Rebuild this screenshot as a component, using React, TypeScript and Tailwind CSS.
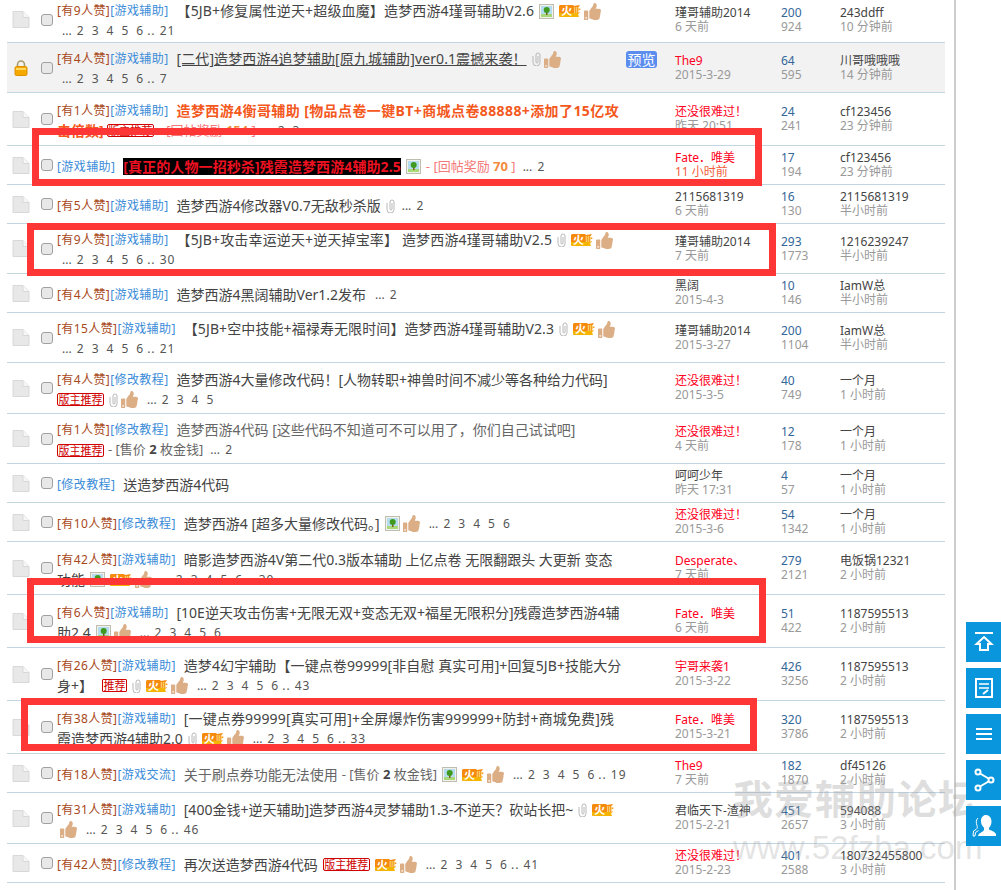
import React from "react";
import { FaThumbsUp } from "react-icons/fa";

const Like = ({ n }: { n: number }) => <span className="text-[#a8481a]">[有{n}人赞]</span>;
const Cat = ({ c }: { c: string }) => <span className="text-[#3a8bd8]">[{c}]</span>;
const Tag = ({ n, c }: { n?: number; c: string }) => (
  <span className="text-xs tracking-[0.4px] mr-2 shrink-0">
    {n ? <Like n={n} /> : null}
    <Cat c={c} />
  </span>
);

const Thumb = () => (
  <span className="inline-flex ml-[3px] mr-[2px] text-[#dcae86] shrink-0">
    <FaThumbsUp size={17} />
  </span>
);

const Img = () => (
  <svg width="15" height="15" viewBox="0 0 15 15" className="inline-block ml-[5px] shrink-0">
    <rect x="0.5" y="0.5" width="14" height="14" fill="#f2f2ea" stroke="#bdbdb0" />
    <rect x="2" y="2" width="11" height="8" fill="#b4dcef" />
    <rect x="2" y="10" width="11" height="3" fill="#a8d878" />
    <rect x="7" y="7" width="1.5" height="4" fill="#7a5a20" />
    <circle cx="7.7" cy="6" r="3" fill="#3f9a1e" />
  </svg>
);

const Clip = () => (
  <svg width="9" height="14" viewBox="0 0 9 14" className="inline-block ml-[5px] shrink-0" fill="none" stroke="#b8b8b8" strokeWidth="1">
    <path d="M1 4v6.5a3.500 3.500 0 0 0 7 0V3a2 2 0 0 0-4 0v7a1 1 0 0 0 2 0V4" />
  </svg>
);

const Fire = () => (
  <span className="relative inline-block w-[22px] h-[14px] ml-[5px] shrink-0 leading-[14px]">
    <svg width="22" height="14" viewBox="0 0 22 14" className="absolute inset-0">
      <path d="M1 1h13l1 1 6-1-2 3 3 1-3 2 2 2-3 1 1 3H1l-1-1V2z" fill="#f58a0c" />
      <path d="M0 9h20l-1 1 1 3H1l-1-1z" fill="#f4b400" />
    </svg>
    <span className="absolute left-[2px] top-0 text-[11px] leading-[14px] font-bold text-white">火</span>
    <span className="absolute left-[14px] top-0 text-[7px] leading-[14px] text-[#fff2b0]">Ⅲ</span>
  </span>
);

const Pick = () => (
  <span className="inline-block h-[13px] w-[47px] ml-0 border border-[#d00000] rounded-[2px] text-[11px] leading-[11px] text-center text-[#d00000] shrink-0">版主推荐</span>
);
const Pick2 = () => (
  <span className="inline-block h-[13px] w-[25px] ml-[9px] border border-[#d00000] rounded-[1px] text-[11px] leading-[11px] text-center text-[#d00000] shrink-0">推荐</span>
);

const Pages = ({ list, last, ml = "ml-[7px]" }: { list: number[]; last?: number; ml?: string }) => (
  <span className={`${ml} text-xs text-[#555] whitespace-pre shrink-0`}>
    <span className="mr-[2px]">...</span>{" "}
    {list.map((p) => (
      <span key={p} className="mr-[8px]">{p}</span>
    ))}
    {last ? <span className="ml-[-4px] tracking-[1px]">.. {last}</span> : null}
  </span>
);

const Reward = ({ v }: { v: number }) => (
  <span className="ml-[5px] text-[13px] text-[#f47a7a] shrink-0">
    - [回帖奖励 <b className="text-[#f28a3c]">{v}</b> ]
  </span>
);
const Price = () => (
  <span className="ml-[4px] text-[13px] text-[#666] shrink-0">
    - [售价 <b className="text-[#444]">2</b> 枚金钱]
  </span>
);

const Title = ({ children, cls = "" }: { children: React.ReactNode; cls?: string }) => (
  <span className={`text-sm text-[#444] shrink-0 ${cls}`}>{children}</span>
);

const P5 = [2, 3, 4, 5, 6];

type Row = {
  h: string;
  icon?: "lock";
  bg?: string;
  l1: React.ReactNode;
  l2?: React.ReactNode;
  a: string;
  red?: boolean;
  d: string;
  dc?: string;
  n1: string;
  n2: string;
  u: string;
  t: string;
};

const rows: Row[] = [
  {
    h: "h-[43px] pb-[3px]",
    l1: (<><Tag n={9} c="游戏辅助" /><Title cls="tracking-[0.15px]">【5JB+修复属性逆天+超级血魔】造梦西游4瑾哥辅助V2.6</Title><Img /><Fire /><Thumb /></>),
    l2: <Pages list={P5} last={21} ml="ml-[5px]" />,
    a: "瑾哥辅助2014", d: "6 天前", n1: "200", n2: "924", u: "243ddff", t: "10 分钟前",
  },
  {
    h: "h-[50px]", icon: "lock", bg: "bg-[#f2f2f2]",
    l1: (<><Tag n={4} c="游戏辅助" /><Title cls="underline text-[#333] tracking-[0.1px]">[二代]造梦西游4追梦辅助[原九城辅助]ver0.1震撼来袭！</Title><Clip /><Thumb /><span className="ml-auto mr-[18px] w-[31px] h-[17px] bg-[#5b8def] rounded-[3px] text-white text-sm leading-[17px] text-center shrink-0">预览</span></>),
    l2: <Pages list={P5} last={7} ml="ml-[5px]" />,
    a: "The9", red: true, d: "2015-3-29", n1: "64", n2: "595", u: "川哥哦哦哦", t: "14 分钟前",
  },
  {
    h: "h-[53px]",
    l1: (<><Tag n={1} c="游戏辅助" /><Title cls="font-bold text-[#f4581c] tracking-[0.4px]">造梦西游4衡哥辅助 [物品点卷一键BT+商城点卷88888+添加了15亿攻</Title></>),
    l2: (<><Title cls="font-bold text-[#f4581c]">击倍数]</Title><span className="ml-[3px] flex"><Pick /></span><Reward v={154} /><Pages list={[2, 3]} /></>),
    a: "还没很难过！", red: true, d: "昨天 20:51", n1: "24", n2: "241", u: "cf123456", t: "23 分钟前",
  },
  {
    h: "h-[39px]",
    l1: (<><Tag c="游戏辅助" /><Title cls="font-bold text-[#ee1122] bg-black tracking-[0.1px] leading-[17px]">[真正的人物一招秒杀]残霞造梦西游4辅助2.5</Title><Img /><Reward v={70} /><Pages list={[2]} /></>),
    a: "Fate．唯美", red: true, d: "11 小时前", dc: "text-[#f2603c]", n1: "17", n2: "194", u: "cf123456", t: "23 分钟前",
  },
  {
    h: "h-[39px]",
    l1: (<><Tag n={5} c="游戏辅助" /><Title>造梦西游4修改器V0.7无敌秒杀版</Title><Clip /><Pages list={[2]} /></>),
    a: "2115681319", d: "6 天前", n1: "16", n2: "130", u: "2115681319", t: "半小时前",
  },
  {
    h: "h-[50px]",
    l1: (<><Tag n={9} c="游戏辅助" /><Title cls="tracking-[0.15px]">【5JB+攻击幸运逆天+逆天掉宝率】 造梦西游4瑾哥辅助V2.5</Title><Clip /><Fire /><Thumb /></>),
    l2: <Pages list={P5} last={30} ml="ml-[5px]" />,
    a: "瑾哥辅助2014", d: "7 天前", n1: "293", n2: "1773", u: "1216239247", t: "半小时前",
  },
  {
    h: "h-[39px]",
    l1: (<><Tag n={4} c="游戏辅助" /><Title>造梦西游4黑阔辅助Ver1.2发布</Title><Pages list={[2]} ml="ml-[9px]" /></>),
    a: "黑阔", d: "2015-4-3", n1: "10", n2: "146", u: "IamW总", t: "半小时前",
  },
  {
    h: "h-[50px]",
    l1: (<><Tag n={15} c="游戏辅助" /><Title cls="tracking-[0.1px]">【5JB+空中技能+福禄寿无限时间】造梦西游4瑾哥辅助V2.3</Title><Clip /><Fire /><Thumb /></>),
    l2: <Pages list={P5} last={21} ml="ml-[5px]" />,
    a: "瑾哥辅助2014", d: "2015-3-27", n1: "200", n2: "1104", u: "IamW总", t: "半小时前",
  },
  {
    h: "h-[51px]",
    l1: (<><Tag n={4} c="修改教程" /><Title>造梦西游4大量修改代码！[人物转职+神兽时间不减少等各种给力代码]</Title></>),
    l2: (<><Pick /><Clip /><Thumb /><Pages list={[2, 3, 4, 5]} /></>),
    a: "还没很难过！", red: true, d: "2015-3-5", n1: "40", n2: "749", u: "一个月", t: "1 小时前",
  },
  {
    h: "h-[50px]",
    l1: (<><Tag n={1} c="修改教程" /><Title cls="text-[#666]">造梦西游4代码 [这些代码不知道可不可以用了，你们自己试试吧]</Title></>),
    l2: (<><Pick /><Price /><Pages list={[2]} /></>),
    a: "还没很难过！", red: true, d: "4 天前", n1: "12", n2: "178", u: "一个月", t: "1 小时前",
  },
  {
    h: "h-[39px]",
    l1: (<><Tag c="修改教程" /><Title>送造梦西游4代码</Title></>),
    a: "呵呵少年", d: "昨天 17:31", n1: "4", n2: "57", u: "一个月", t: "1 小时前",
  },
  {
    h: "h-[39px]",
    l1: (<><Tag n={10} c="修改教程" /><Title>造梦西游4 [超多大量修改代码。]</Title><Img /><Thumb /><Pages list={P5} /></>),
    a: "还没很难过！", red: true, d: "2015-3-6", n1: "54", n2: "1342", u: "一个月", t: "1 小时前",
  },
  {
    h: "h-[53px]",
    l1: (<><Tag n={42} c="游戏辅助" /><Title>暗影造梦西游4V第二代0.3版本辅助 上亿点卷 无限翻跟头 大更新 变态</Title></>),
    l2: (<><Title>功能</Title><Img /><Fire /><Thumb /><Pages list={P5} last={30} /></>),
    a: "Desperate、", red: true, d: "7 天前", n1: "279", n2: "2121", u: "电饭锅12321", t: "2 小时前",
  },
  {
    h: "h-[53px]",
    l1: (<><Tag n={6} c="游戏辅助" /><Title>[10E逆天攻击伤害+无限无双+变态无双+福星无限积分]残霞造梦西游4辅</Title></>),
    l2: (<><Title>助2.4</Title><Img /><Thumb /><Pages list={P5} /></>),
    a: "Fate．唯美", red: true, d: "6 天前", n1: "51", n2: "422", u: "1187595513", t: "2 小时前",
  },
  {
    h: "h-[53px]",
    l1: (<><Tag n={26} c="游戏辅助" /><Title cls="tracking-[0.1px]">造梦4幻宇辅助【一键点卷99999[非自慰 真实可用]+回复5JB+技能大分</Title></>),
    l2: (<><Title>身+】</Title><Pick2 /><Clip /><Fire /><Thumb /><Pages list={P5} last={43} /></>),
    a: "宇哥来袭1", red: true, d: "2015-3-22", n1: "426", n2: "3256", u: "1187595513", t: "2 小时前",
  },
  {
    h: "h-[53px]",
    l1: (<><Tag n={38} c="游戏辅助" /><Title cls="tracking-[0.15px]">[一键点券99999[真实可用]+全屏爆炸伤害999999+防封+商城免费]残</Title></>),
    l2: (<><Title>霞造梦西游4辅助2.0</Title><Clip /><Fire /><Thumb /><Pages list={P5} last={33} /></>),
    a: "Fate．唯美", red: true, d: "2015-3-21", n1: "320", n2: "3786", u: "1187595513", t: "2 小时前",
  },
  {
    h: "h-[39px]",
    l1: (<><Tag n={18} c="游戏交流" /><Title cls="text-[#666]">关于刷点券功能无法使用</Title><Price /><Img /><Fire /><Thumb /><Pages list={P5} last={19} /></>),
    a: "The9", red: true, d: "7 天前", n1: "182", n2: "1870", u: "df45126", t: "2 小时前",
  },
  {
    h: "h-[51px]",
    l1: (<><Tag n={31} c="游戏辅助" /><Title>[400金钱+逆天辅助]造梦西游4灵梦辅助1.3-不逆天？砍站长把~</Title><Clip /><Fire /></>),
    l2: (<><Thumb /><Pages list={P5} last={46} /></>),
    a: "君临天下-渣神", d: "2015-2-21", n1: "451", n2: "2657", u: "594088", t: "3 小时前",
  },
  {
    h: "h-[39px]",
    l1: (<><Tag n={42} c="修改教程" /><Title>再次送造梦西游4代码</Title><span className="ml-[5px] flex"><Pick /></span><Fire /><Thumb /><Pages list={P5} last={41} /></>),
    a: "还没很难过！", red: true, d: "2015-2-23", n1: "401", n2: "2588", u: "180732455800", t: "3 小时前",
  },
];

const PageIcon = () => (
  <svg width="18" height="19" viewBox="0 0 18 19">
    <path d="M1 1.500h10l6 6v10H1z" fill="#e8e8e8" stroke="#d8d8d8" />
    <path d="M11 1.500v6h6" fill="#f6f6f6" stroke="#d8d8d8" />
  </svg>
);

const LockIcon = () => (
  <svg width="14" height="16" viewBox="0 0 14 16">
    <path d="M3.500 7V4.500a3.500 3.500 0 0 1 7 0V7" fill="none" stroke="#a89a6a" strokeWidth="1.600" />
    <rect x="1" y="6.500" width="12" height="9" rx="1.500" fill="#f5a800" stroke="#e09000" />
    <rect x="2" y="8" width="10" height="2" fill="#ffd860" />
  </svg>
);

const Side = ({ children }: { children: React.ReactNode }) => (
  <div className="w-[35px] h-[40px] bg-[#0a96dc] flex items-center justify-center">{children}</div>
);

export default function App() {
  return (
    <div className="relative h-[890px] w-[1001px] overflow-hidden bg-white font-['Noto_Sans','Noto_Sans_CJK_SC',sans-serif]">
      <div className="w-[956px] h-full border-r-2 border-[#cccccc] pl-[7px] pr-[9px]">
        {rows.map((r, i) => (
          <div key={i} className={`flex items-center border-b border-[#c2d5e3] ${r.h} ${r.bg ?? ""}`}>
            <div className="w-[34px] pl-[5px] flex items-center shrink-0">
              {r.icon === "lock" ? <span className="ml-[2px] flex"><LockIcon /></span> : <PageIcon />}
            </div>
            <div className="w-[16px] flex items-center shrink-0">
              <input type="checkbox" className="appearance-none w-[12px] h-[12px] border border-[#a0a0a0] rounded-[3px] bg-[#e8e8e8]" />
            </div>
            <div className="w-[618px] shrink-0 mt-[3px]">
              <div className="flex items-center h-[20px] whitespace-nowrap">{r.l1}</div>
              {r.l2 ? <div className="flex items-center h-[20px] whitespace-nowrap">{r.l2}</div> : null}
            </div>
            <div className="w-[106px] shrink-0 text-xs leading-[14px]">
              <div className={r.red ? "text-[#ff0022]" : "text-[#444]"}>{r.a}</div>
              <div className={r.dc ?? "text-[#999]"}>{r.d}</div>
            </div>
            <div className="w-[59px] shrink-0 text-xs leading-[14px]">
              <div className="text-[#369]">{r.n1}</div>
              <div className="text-[#999]">{r.n2}</div>
            </div>
            <div className="flex-1 text-xs leading-[14px]">
              <div className="text-[#444]">{r.u}</div>
              <div className="text-[#999]">{r.t}</div>
            </div>
          </div>
        ))}
      </div>

      <div className="absolute left-[32px] top-[128px] w-[730px] h-[58px] border-[7px] border-[#ff3636]" />
      <div className="absolute left-[27px] top-[223px] w-[749px] h-[53px] border-[7px] border-[#ff3636]" />
      <div className="absolute left-[27px] top-[578px] w-[739px] h-[65px] border-[7px] border-[#ff3636]" />
      <div className="absolute left-[21px] top-[698px] w-[736px] h-[53px] border-[7px] border-[#ff3636]" />

      <div className="absolute left-[733px] top-[771px] text-[40px] leading-[56px] tracking-[1px] font-bold text-[#a0a0a0]/35 whitespace-nowrap">我爱辅助论坛</div>
      <div className="absolute left-[733px] top-[828px] text-[33px] leading-[40px] font-['Liberation_Sans',sans-serif] text-[#a0a0a0]/30 whitespace-nowrap">www.52fzba.com</div>

      <div className="absolute left-[966px] top-[622px] flex flex-col gap-[6px]">
        <Side>
          <svg width="20" height="20" viewBox="0 0 20 20" fill="none" stroke="#fff" strokeWidth="2">
            <path d="M1 1h18" />
            <path d="M10 5l7.500 7H14v6H6v-6H2.500z" />
          </svg>
        </Side>
        <Side>
          <svg width="18" height="20" viewBox="0 0 18 20" fill="none" stroke="#fff" strokeWidth="2">
            <rect x="1" y="1" width="16" height="18" />
            <path d="M4 6h10M4 10h10" strokeWidth="1.500" />
            <path d="M8 16l5-4" strokeWidth="2" />
          </svg>
        </Side>
        <Side>
          <svg width="16" height="12" viewBox="0 0 16 12" fill="#fff">
            <rect y="0" width="16" height="2" />
            <rect y="5" width="16" height="2" />
            <rect y="10" width="16" height="2" />
          </svg>
        </Side>
        <Side>
          <svg width="22" height="24" viewBox="0 0 22 24" fill="none" stroke="#fff" strokeWidth="2">
            <circle cx="5" cy="4" r="2.500" />
            <circle cx="18" cy="12" r="2.500" />
            <circle cx="5" cy="20" r="2.500" />
            <path d="M7 5.500l8.500 5M15.500 13.500L7 18.500" />
          </svg>
        </Side>
        <Side>
          <svg width="24" height="24" viewBox="0 0 24 24" fill="#fff">
            <path d="M14 1c3.500 0 5.500 3 5.500 6.500 0 3-1.200 5-2.500 6.200v1.800c2 1 6 2 7 4.500v2H6c.4-3 5-3.800 6-6v-2.300C10 12 9 10 9 7c0-3.500 2-6 5-6z" />
            <path d="M6 4C3.800 6 4 9 5 11.500c.5 1 .5 3-1 4L1.500 17 1 22h2l.5-3.500 3-2" fill="none" stroke="#fff" strokeWidth="1" />
          </svg>
        </Side>
      </div>
    </div>
  );
}
